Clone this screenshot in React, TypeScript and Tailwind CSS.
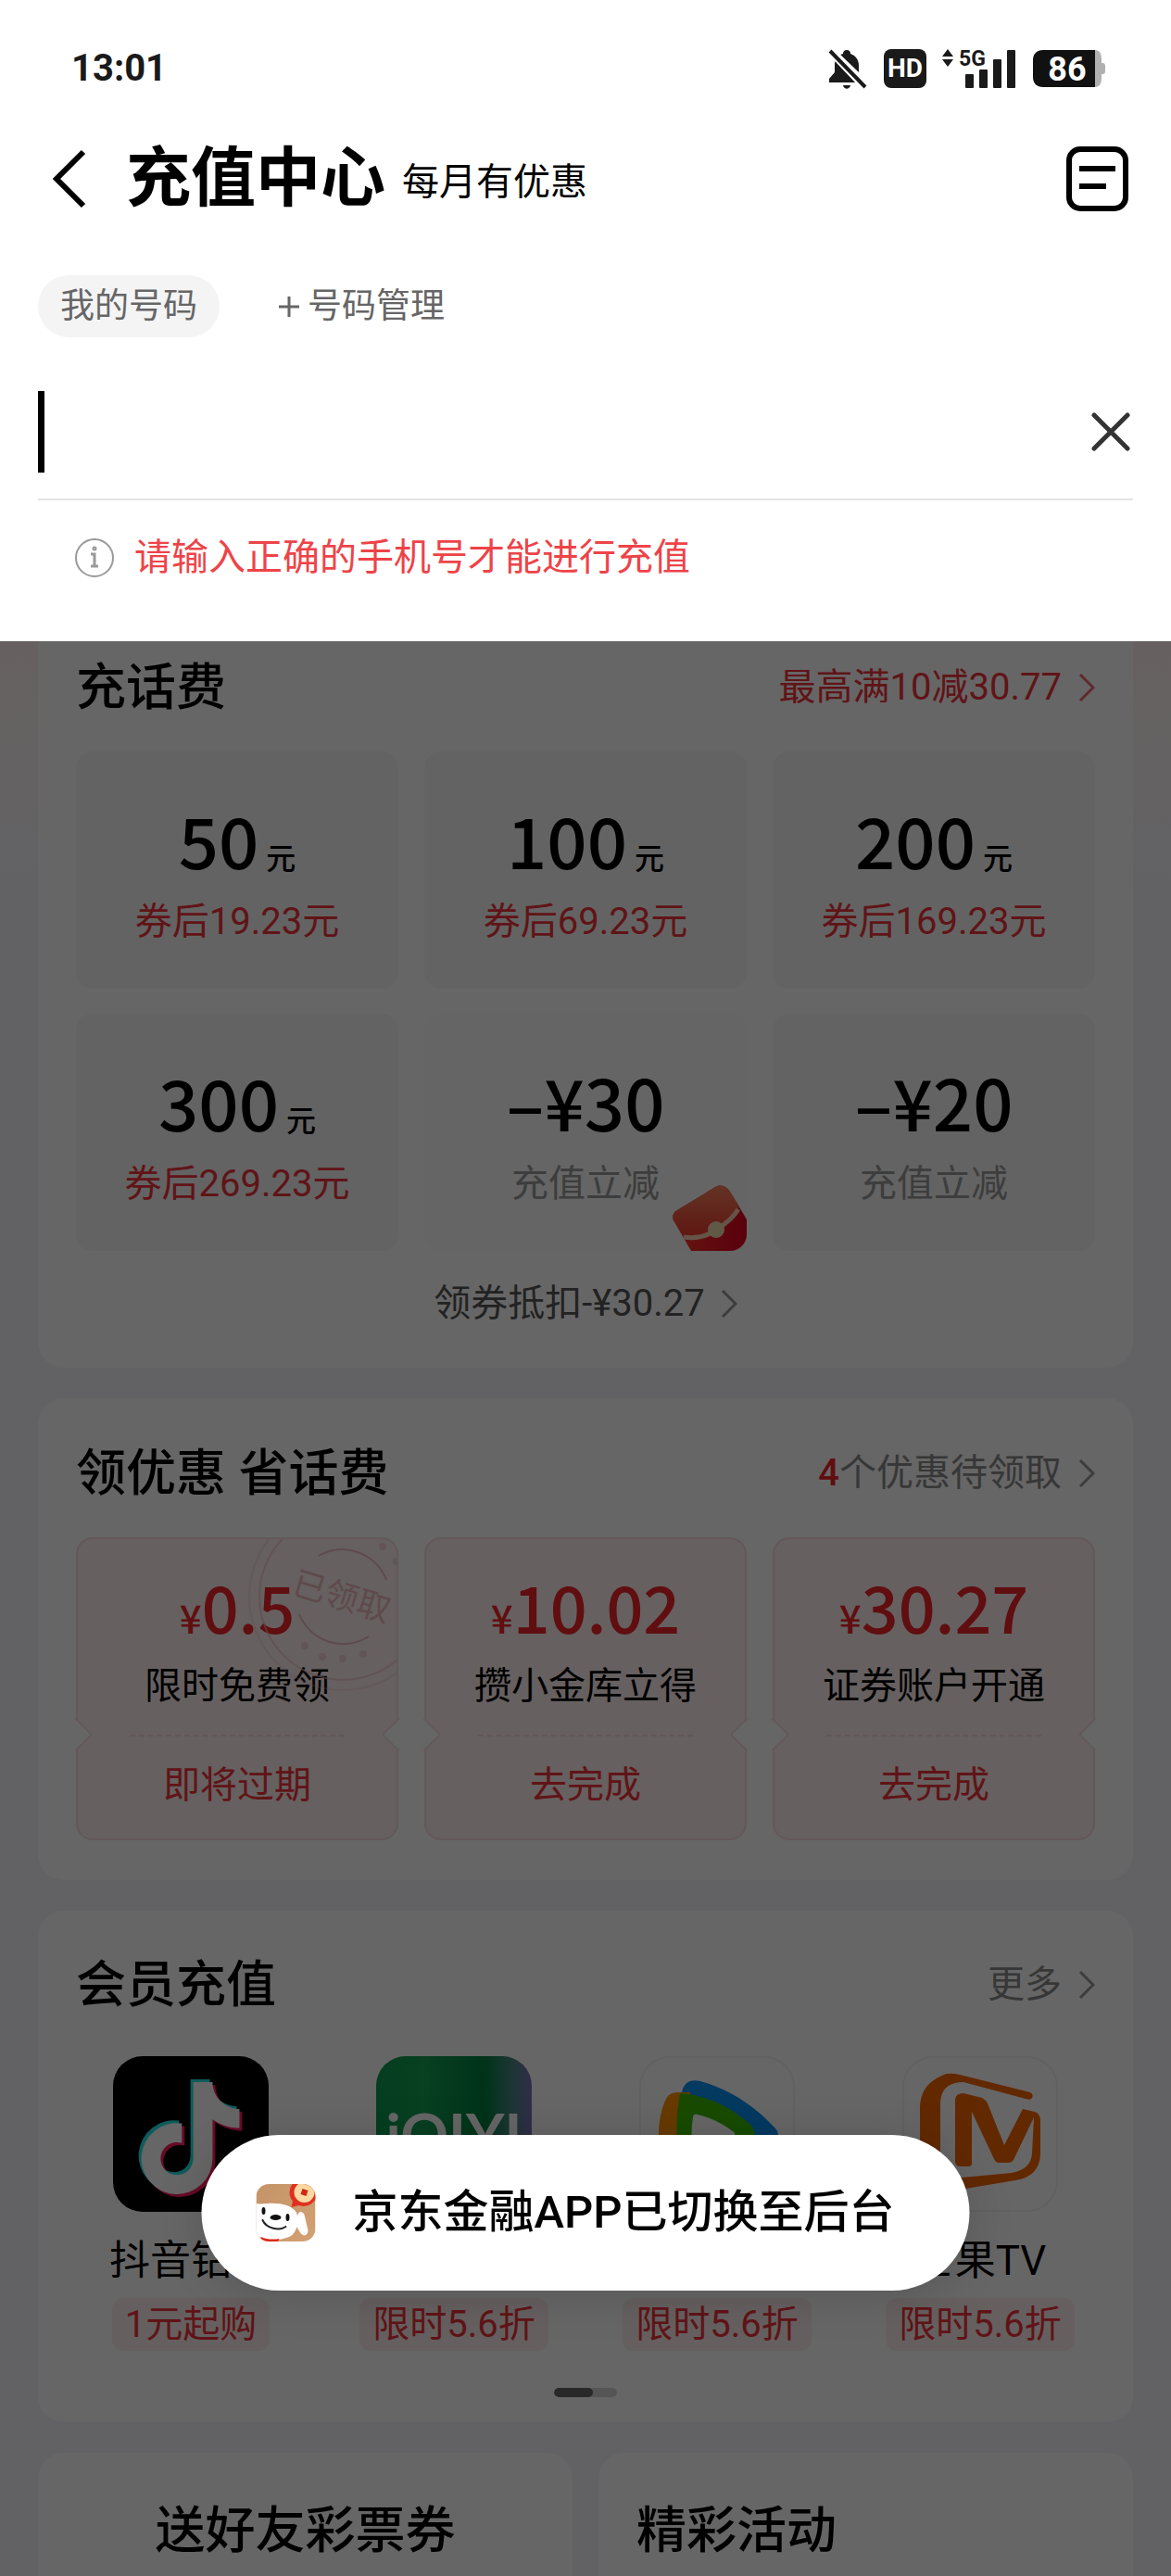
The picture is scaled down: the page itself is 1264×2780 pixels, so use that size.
import { useState } from "react";
import type { ReactNode } from "react";
import { FaTiktok } from "react-icons/fa6";

const amounts = [
  { value: "50", unit: "元", note: "券后19.23元" },
  { value: "100", unit: "元", note: "券后69.23元" },
  { value: "200", unit: "元", note: "券后169.23元" },
  { value: "300", unit: "元", note: "券后269.23元" },
  { value: "–¥30", note: "充值立减", muted: true, packet: true },
  { value: "–¥20", note: "充值立减", muted: true },
];

const coupons = [
  { value: "0.5", label: "限时免费领", action: "即将过期", claimed: true },
  { value: "10.02", label: "攒小金库立得", action: "去完成" },
  { value: "30.27", label: "证券账户开通", action: "去完成" },
];

const members = [
  { name: "抖音钻石", tag: "1元起购", logo: <DouyinLogo /> },
  { name: "爱奇艺", tag: "限时5.6折", logo: <IqiyiLogo /> },
  { name: "腾讯视频", tag: "限时5.6折", logo: <TencentLogo /> },
  { name: "芒果TV", tag: "限时5.6折", logo: <MangoLogo /> },
];

function Chevron({ color = "#999" }: { color?: string }) {
  return (
    <svg width="18" height="30" viewBox="0 0 18 30" fill="none" stroke={color} strokeWidth="3">
      <path d="M2 1l14 14L2 29" />
    </svg>
  );
}

function StatusBar() {
  return (
    <div className="flex h-[148px] items-center justify-between pr-[71px] pl-[77px] text-[#1a1a1a]">
      <span className="text-[40px] font-bold">13:01</span>
      <div className="flex items-center">
        <svg width="42" height="43" viewBox="0 0 42 43" fill="#1a1a1a">
          <path d="M20 1c3 0 4 2 4 4 6 2 9 7 9 13v7L13 6l3-1c0-2 1-4 4-4z" />
          <path d="M8 11l26 25H1v-4l6-7V15z" />
          <path d="M2 1l39 41" stroke="#fff" strokeWidth="9" />
          <path d="M2 2l38 39" stroke="#1a1a1a" strokeWidth="4" />
          <path d="M16 39h8c-1 5-7 5-8 0z" />
        </svg>
        <span className="ml-[18px] flex h-[42px] w-[46px] items-center justify-center rounded-[8px] bg-[#1a1a1a] text-[28px] leading-none font-bold text-white">
          HD
        </span>
        <svg className="ml-[17px]" width="79" height="52" viewBox="0 -4 79 52" fill="#1a1a1a">
          <path d="M0 9l6-8 6 8zM0 12h12l-6 8z" />
          <text x="18" y="19" fontFamily="Roboto, sans-serif" fontSize="23" fontWeight="700">
            5G
          </text>
          <rect x="25" y="28" width="9" height="15" rx="1" />
          <rect x="40" y="23" width="9" height="20" rx="1" />
          <rect x="55" y="12" width="9" height="31" rx="1" />
          <rect x="70" y="2" width="9" height="41" rx="1" />
        </svg>
        <svg className="ml-[19px]" width="78" height="44" viewBox="0 -2 78 44">
          <path d="M60 0h7c5 0 7 4 7 10v4h1c2 0 3 1 3 3v6c0 2-1 3-3 3h-1v4c0 6-2 10-7 10h-7z" fill="#b0b0b0" />
          <path d="M11 0h56v40H11C4 40 0 36 0 29V11C0 4 4 0 11 0z" fill="#111" />
          <text x="37" y="33" textAnchor="middle" fontFamily="Roboto, sans-serif" fontSize="36" fontWeight="700" fill="#fff">
            86
          </text>
        </svg>
      </div>
    </div>
  );
}

function PhonePanel() {
  const [phone, setPhone] = useState("");

  return (
    <header className="bg-white pb-7">
      <StatusBar />

      <div className="flex h-[90px] items-center pr-[46px] pl-[56px]">
        <button type="button" aria-label="返回">
          <svg width="37" height="64" viewBox="0 0 37 64" fill="none" stroke="#000" strokeWidth="6">
            <path d="M34 3L5 32l29 29" />
          </svg>
        </button>
        <h1 className="ml-[43px] text-[70px] leading-[90px] font-bold">充值中心</h1>
        <span className="mt-[8px] ml-[18px] text-[40px]">每月有优惠</span>
        <button type="button" aria-label="订单" className="ml-auto">
          <svg width="67" height="70" viewBox="0 0 67 70" fill="none" stroke="#000" strokeWidth="6">
            <rect x="3" y="3" width="61" height="64" rx="12" />
            <path d="M14 24h39M14 43h29" />
          </svg>
        </button>
      </div>

      <div className="mt-[59px] flex items-center pl-[41px] text-[37px] leading-[67px] text-[#666]">
        <button type="button" className="rounded-full bg-[#f4f4f4] px-6">
          我的号码
        </button>
        <button type="button" className="ml-[62px] flex items-center gap-[7px]">
          <svg width="26" height="26" viewBox="0 0 26 26" stroke="currentColor" strokeWidth="3">
            <path d="M2 13h22M13 2v22" />
          </svg>
          号码管理
        </button>
      </div>

      <div className="mx-[41px] mt-[30px] flex h-[146px] items-center border-b-2 border-[#e3e3e3]">
        <span className="h-[88px] w-[7px] bg-black" />
        <input
          type="tel"
          aria-label="手机号"
          value={phone}
          onChange={(e) => setPhone(e.target.value)}
          className="h-[88px] min-w-0 flex-1 text-[64px] outline-none"
        />
        <button type="button" aria-label="清空" onClick={() => setPhone("")}>
          <svg width="46" height="42" viewBox="0 0 46 42" fill="none" stroke="#333" strokeWidth="5" strokeLinecap="round">
            <path d="M4 3l36 36M40 3L4 39" />
          </svg>
        </button>
      </div>

      <p className="flex h-[124px] items-center gap-[22px] pl-[81px] text-[40px] text-[#ee4348]">
        <svg width="42" height="42" viewBox="0 0 42 42" fill="none" stroke="#999" strokeWidth="2">
          <circle cx="21" cy="21" r="20" />
          <path d="M17 17h4v13M17 30h8" strokeWidth="3" />
          <circle cx="21" cy="11" r="1" strokeWidth="3" />
        </svg>
        请输入正确的手机号才能进行充值
      </p>
    </header>
  );
}

function SectionHeader({ title, arrow, children }: { title: string; arrow?: string; children: ReactNode }) {
  return (
    <div className="flex h-[60px] items-center justify-between">
      <h2 className="text-[54px] font-medium">{title}</h2>
      <a href="#" className="flex items-center gap-[18px] text-[40px] text-[#8a8a8a]">
        {children}
        <Chevron color={arrow} />
      </a>
    </div>
  );
}

function RedPacket() {
  return (
    <svg className="absolute right-0 bottom-0" width="80" height="71" viewBox="0 0 80 71">
      <defs>
        <linearGradient id="flap" x1="0" y1="0" x2="0" y2="1">
          <stop offset="0" stopColor="#f7805c" />
          <stop offset="1" stopColor="#ee3a2c" />
        </linearGradient>
        <linearGradient id="pocket" x1="0" y1="0" x2="1" y2="0">
          <stop offset="0" stopColor="#ff3a2a" />
          <stop offset="1" stopColor="#e00020" />
        </linearGradient>
      </defs>
      <path d="M1 38c-2-5 0-9 4-11L46 2c7-3 12-1 16 5l18 30v34H20z" fill="url(#pocket)" />
      <path d="M1 38c-2-5 0-9 4-11L46 2c7-3 12-1 16 5l10 16C60 50 40 58 13 56z" fill="url(#flap)" />
      <path d="M12 56c14 2 26-1 35-8 10-6 18-12 24-22" stroke="#ffd0b4" strokeWidth="5" fill="none" />
      <circle cx="47" cy="48" r="9" fill="#f5dcb0" />
    </svg>
  );
}

function Stamp() {
  return (
    <div className="absolute inset-0 overflow-hidden rounded-[18px]">
      <svg
        className="absolute -top-[40px] -right-[44px] text-[#ecbabd]"
        width="204"
        height="204"
        viewBox="0 0 204 204"
        fill="none"
        stroke="currentColor"
      >
        <circle cx="102" cy="102" r="101" strokeWidth="2" opacity="0.3" />
        <circle cx="102" cy="102" r="90" strokeWidth="2" opacity="0.6" />
        <path d="M76 58A51 51 0 0 1 149 84M55 121A51 51 0 0 0 130 145" strokeWidth="2" />
        <g fill="currentColor" stroke="none" opacity="0.5">
          <circle cx="61" cy="155" r="4" />
          <circle cx="80" cy="167" r="4" />
          <circle cx="102" cy="169" r="4" />
          <circle cx="124" cy="164" r="4" />
          <circle cx="145" cy="48" r="4" />
          <circle cx="160" cy="64" r="4" />
        </g>
        <text
          x="101"
          y="115"
          textAnchor="middle"
          transform="rotate(17 102 102)"
          fontFamily="Noto Sans CJK SC, sans-serif"
          fontSize="36"
          fill="currentColor"
          stroke="none"
        >
          已领取
        </text>
      </svg>
    </div>
  );
}

function DouyinLogo() {
  return (
    <svg width="168" height="168" viewBox="0 0 168 168">
      <rect width="168" height="168" rx="32" fill="#000" />
      <FaTiktok x="20" y="25" size="121" color="#25e4e4" />
      <FaTiktok x="26" y="31" size="121" color="#fe1c60" />
      <FaTiktok x="23" y="28" size="121" color="#fff" />
    </svg>
  );
}

function IqiyiLogo() {
  return (
    <svg width="168" height="168" viewBox="0 0 168 168">
      <defs>
        <linearGradient id="iqiyi" x1="0" y1="0" x2="1" y2="0">
          <stop offset="0" stopColor="#0c9a50" />
          <stop offset="0.3" stopColor="#14a054" />
          <stop offset="0.7" stopColor="#007f40" />
          <stop offset="0.88" stopColor="#4c8784" />
          <stop offset="1" stopColor="#7a70b8" />
        </linearGradient>
      </defs>
      <rect width="168" height="168" rx="32" fill="url(#iqiyi)" />
      <text x="84" y="108" textAnchor="middle" fontFamily="Lato, sans-serif" fontSize="64" fontWeight="700" fill="#fff">
        iQIYI
      </text>
    </svg>
  );
}

function TencentLogo() {
  return (
    <svg width="168" height="168" viewBox="0 0 168 168">
      <rect x="1" y="1" width="166" height="166" rx="32" fill="#fff" stroke="#f2f2f2" strokeWidth="2" />
      <path d="M46 42c0-12 8-18 20-15 30 8 58 26 80 50 5 5 5 9 0 14-22 24-50 42-80 50-12 3-20-3-20-15z" fill="#0a90f0" />
      <path d="M21 84c0-14 3-28 8-38 3-6 8-7 16-7h10v90H45c-8 0-13-1-16-7-5-10-8-24-8-38z" fill="#ff9100" />
      <path d="M44 40c28 2 54 14 76 34 6 6 6 14 0 20-22 20-48 32-76 35-5-29-5-60 0-89z" fill="#3cbc00" />
      <path d="M58 66c0-3 2-4 5-3 14 3 27 10 38 18 3 2 3 4 0 6-11 8-24 14-38 18-3 1-5 0-5-3-2-12-2-24 0-36z" fill="#fff" />
    </svg>
  );
}

function MangoLogo() {
  return (
    <svg width="168" height="168" viewBox="0 0 168 168">
      <rect x="1" y="1" width="166" height="166" rx="32" fill="#fff" stroke="#f2f2f2" strokeWidth="2" />
      <path
        d="M57 46Q58 40 66 40L86 45Q90 47 92 51L110 96L130 57L143 60Q149 62 149 70V106Q148 130 122 134L44 147Q19 147 19 120V54Q20 28 48 19Q54 18 62 20L138 39Q142 41 140 45Q138 48 133 46L66 28Q41 28 41 52V112Q41 133 64 131L118 126Q139 122 140 105L142 66L120 112Q118 115 114 115H104Q101 115 99 111L75 60V116Q75 119 71 119H63Q57 119 57 113Z"
        fill="#f56600"
      />
    </svg>
  );
}

function Toast() {
  return (
    <div
      role="status"
      className="fixed bottom-[308px] left-1/2 flex h-[168px] w-[829px] -translate-x-1/2 items-center gap-[40px] rounded-full bg-white pl-[59px] text-[49px] font-medium whitespace-nowrap shadow-[0_4px_50px_rgba(0,0,0,0.15)]"
    >
      <svg className="shrink-0" width="64" height="62" viewBox="0 0 64 62">
        <defs>
          <clipPath id="appIcon">
            <rect width="64" height="62" rx="14" />
          </clipPath>
          <linearGradient id="appIconBg" x1="0" y1="0" x2="1" y2="1">
            <stop offset="0" stopColor="#c49468" />
            <stop offset="1" stopColor="#d3a173" />
          </linearGradient>
        </defs>
        <g clipPath="url(#appIcon)">
          <rect width="64" height="62" fill="url(#appIconBg)" />
          <path d="M45 33c1-4 5-4 7 0l4 17c0 6-5 7-8 3l-5-8z" fill="#fff" />
          <path d="M0 21c4 1 8 0 12 0 14-1 26 2 31 9 4 7 2 19-4 25-9 6-28 8-39 0z" fill="#fff" />
          <path d="M5 57c7 3 13 3 20 2l-2 4H6z" fill="#e02a1c" />
          <ellipse cx="8" cy="29" rx="2" ry="4" fill="#111" />
          <ellipse cx="34" cy="36" rx="2" ry="4" fill="#111" />
          <ellipse cx="21" cy="36" rx="6" ry="3" fill="#111" />
          <path d="M7 39c4 9 18 12 25 7" stroke="#222" strokeWidth="2" fill="none" strokeLinecap="round" />
          <circle cx="51" cy="9" r="15" fill="#e03020" />
          <path d="M40 16l-2 9 12-3z" fill="#e03020" />
          <circle cx="52" cy="9" r="11" fill="#fbd9a0" />
          <path d="M50 5l6 2-2 6-6-2z" fill="#d02818" />
        </g>
      </svg>
      <span>京东金融APP已切换至后台</span>
    </div>
  );
}

export default function App() {
  return (
    <div className="flex min-h-screen flex-col bg-[#f6f6fb] font-['Roboto','Noto_Sans_CJK_SC',sans-serif] text-black">
      <PhonePanel />

      <main className="relative flex flex-1 flex-col gap-[33px] bg-[linear-gradient(#fff3f0,#f6f6fb_260px)] px-[41px]">
        <section className="rounded-b-[28px] bg-white px-[41px] pt-[20px] pb-3">
          <SectionHeader title="充话费" arrow="#ee6a6e">
            <span className="text-[#f0343a]">最高满10减30.77</span>
          </SectionHeader>
          <div className="mt-[39px] grid grid-cols-3 gap-x-[28px] gap-y-[27px]">
            {amounts.map((item) => (
              <button
                type="button"
                key={item.value}
                className={`relative flex h-[256px] flex-col items-center overflow-hidden rounded-[18px] pt-[54px] ${
                  item.packet ? "bg-[#fcfcfc]" : "bg-[#f7f7f7]"
                }`}
              >
                <span className="flex h-[80px] items-baseline gap-2 font-['Noto_Sans_CJK_SC',sans-serif] leading-[80px] font-medium">
                  <span className="text-[76px]">{item.value}</span>
                  {item.unit && <span className="text-[32px]">{item.unit}</span>}
                </span>
                <span className={`mt-[20px] text-[40px] leading-[60px] ${item.muted ? "text-[#999]" : "text-[#f0343a]"}`}>
                  {item.note}
                </span>
                {item.packet && <RedPacket />}
              </button>
            ))}
          </div>
          <a href="#" className="flex h-[114px] items-center justify-center gap-[17px] text-[40px] text-[#555]">
            领券抵扣-¥30.27
            <Chevron />
          </a>
        </section>

        <section className="rounded-[28px] bg-white px-[41px] pt-[51px] pb-[43px]">
          <SectionHeader title="领优惠 省话费">
            <span>
              <span className="font-medium text-[#f0242a]">4</span>个优惠待领取
            </span>
          </SectionHeader>
          <div className="mt-[39px] grid grid-cols-3 gap-[28px]">
            {coupons.map((item) => (
              <button
                type="button"
                key={item.value}
                className="relative flex h-[327px] flex-col items-center rounded-[18px] border-2 border-[#f8dcde] bg-[#ffefef] pt-[36px]"
              >
                {item.claimed && <Stamp />}
                <span className="flex h-[72px] items-baseline font-['Noto_Sans_CJK_SC',sans-serif] leading-[72px] font-medium text-[#f0242a]">
                  <span className="text-[42px]">¥</span>
                  <span className="text-[70px]">{item.value}</span>
                </span>
                <span className="mt-[21px] text-[40px] leading-[60px]">{item.label}</span>
                <span className="mt-[22px] w-[232px] border-t-2 border-dashed border-[#f5d8da]" />
                <span className="text-[40px] leading-[106px] text-[#f0343a]">{item.action}</span>
                {/* ticket notches */}
                <span className="absolute top-[198px] -left-[15px] size-[26px] rotate-45 rounded-[3px] border-t-2 border-r-2 border-[#f8dcde] bg-white" />
                <span className="absolute top-[198px] -right-[15px] size-[26px] rotate-45 rounded-[3px] border-b-2 border-l-2 border-[#f8dcde] bg-white" />
              </button>
            ))}
          </div>
        </section>

        <section className="rounded-[28px] bg-white px-[23px] pt-[50px] pb-[27px]">
          <div className="px-[18px]">
            <SectionHeader title="会员充值">更多</SectionHeader>
          </div>
          <div className="mt-[47px] grid grid-cols-4">
            {members.map((item) => (
              <a href="#" key={item.name} className="flex flex-col items-center">
                {item.logo}
                <span className="mt-[23px] text-[44px] leading-[60px]">{item.name}</span>
                <span className="mt-[10px] rounded-[12px] bg-[#fdeeee] px-[14px] text-[40px] leading-[57px] text-[#f0343a]">
                  {item.tag}
                </span>
              </a>
            ))}
          </div>
          <div className="mx-auto mt-10 flex h-[10px] w-[68px] overflow-hidden rounded-full bg-[#d4d4d4]">
            <span className="w-[42px] rounded-full bg-[#666]" />
          </div>
        </section>

        <div className="grid flex-1 grid-cols-2 gap-[28px]">
          <section className="rounded-t-[28px] bg-white px-[41px] pt-[55px] pb-2">
            <h2 className="text-center text-[54px] leading-[60px] font-medium">送好友彩票券</h2>
          </section>
          <section className="rounded-t-[28px] bg-white px-[41px] pt-[55px] pb-2">
            <h2 className="text-[54px] leading-[60px] font-medium">精彩活动</h2>
          </section>
        </div>

        <div className="absolute inset-0 bg-black/60" />
      </main>

      <Toast />
    </div>
  );
}
